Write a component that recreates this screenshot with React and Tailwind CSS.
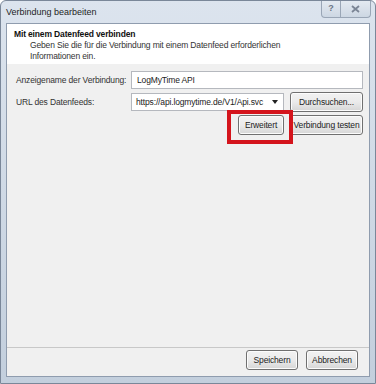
import React from "react";

function WinButton({ children, className = "" }) {
  return (
    <button
      className={
        "flex h-[20px] items-center justify-center whitespace-nowrap rounded-[3px] border border-[#707070] bg-gradient-to-b from-[#f2f2f2] via-[#ebebeb] to-[#d6d6d6] text-[8.5px] tracking-[-0.15px] text-[#222] shadow-[inset_0_0_0_1px_#fcfcfc] " +
        className
      }
    >
      {children}
    </button>
  );
}

function TitleBar() {
  return (
    <div className="flex h-[22px] items-start justify-between">
      <div className="pl-[5px] pt-[5px] text-[9px] leading-[12px] text-[#1e1e1e]">
        Verbindung bearbeiten
      </div>
      <div className="mr-[4px] flex h-[17px] overflow-hidden rounded-b-[4px] border border-t-0 border-[#9aa6b6] bg-gradient-to-b from-[#e4eaf1] to-[#cdd7e3]">
        <div className="flex w-[19px] items-center justify-center border-r border-[#9aa6b6] text-[9px] font-bold text-[#6b7585]">
          ?
        </div>
        <div className="flex w-[29px] items-center justify-center">
          <svg width="9" height="8" viewBox="0 0 9 8">
            <path
              d="M1 1 L8 7 M8 1 L1 7"
              stroke="#7b8595"
              strokeWidth="1.8"
              fill="none"
            />
          </svg>
        </div>
      </div>
    </div>
  );
}

export default function App() {
  return (
    <div
      className="flex h-[384px] w-[376px] flex-col rounded-t-[6px] border border-[#7a8799] bg-gradient-to-b from-[#dce4ee] to-[#c3cfdd] text-[#2a2a2a]"
      style={{ fontFamily: '"Liberation Sans", Arial, sans-serif' }}
    >
      <TitleBar />
      <div className="mx-[5px] mb-[6px] flex flex-1 flex-col border border-[#8f9cae] bg-[#f0f0f0]">
        <div className="h-[40px] bg-white pl-[7px] pt-[5px]">
          <div className="text-[8.5px] font-bold leading-[11px] tracking-[-0.15px] text-[#111]">
            Mit einem Datenfeed verbinden
          </div>
          <div className="pl-[16px] text-[8.5px] leading-[11px] tracking-[-0.15px] text-[#333]">
            Geben Sie die für die Verbindung mit einem Datenfeed erforderlichen
            <br />
            Informationen ein.
          </div>
        </div>

        <div className="flex flex-1 flex-col px-[6px] pt-[7px] text-[8.5px] tracking-[-0.15px]">
          <div className="flex items-center">
            <div className="w-[118px] whitespace-nowrap pl-[3px] text-[#333]">
              Anzeigename der Verbindung:
            </div>
            <div className="flex h-[18px] flex-1 items-center border border-[#b5b8be] bg-white pl-[5px] text-[#222]">
              LogMyTime API
            </div>
          </div>

          <div className="mt-[3px] flex items-center">
            <div className="w-[118px] whitespace-nowrap pl-[3px] text-[#333]">
              URL des Datenfeeds:
            </div>
            <div className="flex h-[18px] w-[153px] items-center justify-between whitespace-nowrap border border-[#b5b8be] bg-white pl-[4px] pr-[5px] text-[#222]">
              <span>https://api.logmytime.de/V1/Api.svc</span>
              <svg width="6" height="4" viewBox="0 0 6 4">
                <path d="M0 0 H6 L3 4 Z" fill="#222" />
              </svg>
            </div>
            <WinButton className="ml-[6px] flex-1">Durchsuchen...</WinButton>
          </div>

          <div className="mt-[3px] flex justify-end">
            <div className="relative">
              <WinButton className="w-[46px]">Erweitert</WinButton>
              <div className="absolute left-[-11px] top-[-5px] h-[34px] w-[66px] border-[4px] border-[#d4141c]" />
            </div>
            <WinButton className="ml-[6px] w-[73px]">Verbindung testen</WinButton>
          </div>

          <div className="flex-1" />
        </div>

        <div className="flex h-[29px] items-start justify-end gap-[8px] border-t border-[#c8c8c8] pr-[11px] pt-[2px]">
          <WinButton className="w-[52px] border-[#3c7fb1] from-[#eaf6fd] via-[#d9f0fc] to-[#a7d9f5]">
            Speichern
          </WinButton>
          <WinButton className="w-[52px]">Abbrechen</WinButton>
        </div>
      </div>
    </div>
  );
}
